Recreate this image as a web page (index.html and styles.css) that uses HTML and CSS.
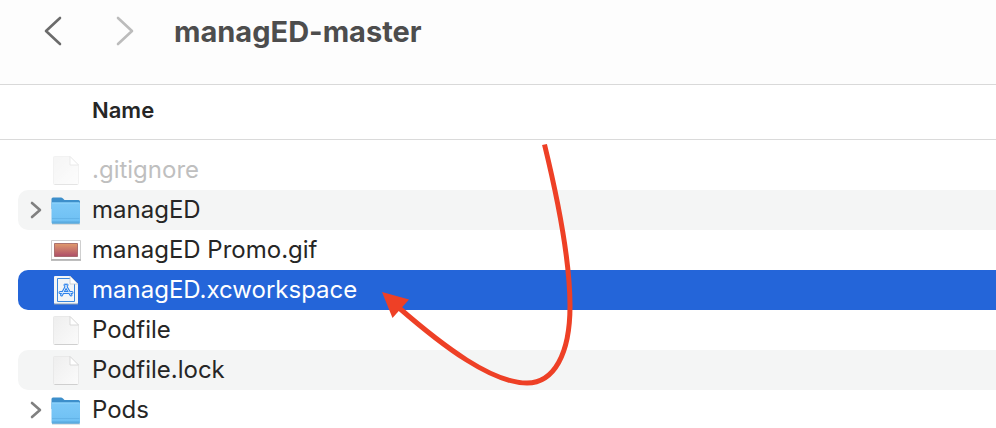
FILE: index.html
```html
<!DOCTYPE html>
<html lang="en">
<head>
<meta charset="utf-8">
<title>managED-master</title>
<link rel="stylesheet" href="styles.css">
</head>
<body>
<svg class="defs" aria-hidden="true">
  <defs>
    <linearGradient id="paper" x1="0" y1="0" x2="1" y2="1"><stop offset="0" stop-color="#eeeeee"/><stop offset="1" stop-color="#fbfbfb"/></linearGradient>
    <linearGradient id="front" x1="0" y1="0" x2="0" y2="1"><stop offset="0" stop-color="#7dc9f8"/><stop offset="1" stop-color="#6dbff3"/></linearGradient>
    <linearGradient id="sunset" x1="0" y1="0" x2="0" y2="1"><stop offset="0" stop-color="#e09a6c"/><stop offset="1" stop-color="#ad4d68"/></linearGradient>
    <symbol id="file" viewBox="0 0 32 32">
      <path d="M4.500 2.500H20L28.500 11V29.500Q28.500 30.500 27.500 30.500H4.500Q3.500 30.500 3.500 29.500V3.500Q3.500 2.500 4.500 2.500Z" fill="url(#paper)" stroke="#e9e9e9"/>
      <path d="M4.500 30.500H27.500" stroke="#cfcfcf"/>
      <path d="M20 2.500V11H28.500Z" fill="#fff" stroke="#d2d2d2" stroke-width=".8"/>
    </symbol>
    <symbol id="folder" viewBox="0 0 32 32">
      <path d="M2 29.500H30V30.500H2Z" fill="#9aa3a8" opacity=".6"/>
      <path d="M1.500 5Q1.500 3.500 3 3.500H11Q12 3.500 13 4.500L14.500 6H28.500Q30 6 30 7.500V15H1.500Z" fill="#3d8fcb"/>
      <path d="M1.500 9.500Q1.500 8.500 2.500 8.500H29Q30 8.500 30 9.500V28.500Q30 29.500 29 29.500H2.500Q1.500 29.500 1.500 28.500Z" fill="url(#front)"/>
      <path d="M2 9H29.500" stroke="#91d5fb"/>
      <path d="M2 24.500H29.500M2 27.500H29.500" stroke="#5fb0e4" stroke-width=".8"/>
      <path d="M2 29H29.500" stroke="#4b99cd"/>
    </symbol>
  </defs>
</svg>
<header class="toolbar">
  <nav class="history">
    <button type="button" class="nav-button" aria-label="Back"><svg viewBox="0 0 20 30"><path d="M16 2L2 15L16 28"/></svg></button>
    <button type="button" class="nav-button forward" aria-label="Forward" disabled><svg viewBox="0 0 20 30"><path d="M2 2L16 15L2 28"/></svg></button>
  </nav>
  <h1>managED-master</h1>
</header>
<main class="browser">
  <table class="files">
    <thead><tr><th scope="col">Name</th></tr></thead>
    <tbody>
      <tr class="hidden-file"><td><div class="row"><span class="disclosure"></span><svg class="icon"><use href="#file"/></svg><span class="name">.gitignore</span></div></td></tr>
      <tr><td><div class="row"><button type="button" class="disclosure" aria-label="Expand managED"><svg viewBox="0 0 12 18"><path d="M2 2L10 9L2 16"/></svg></button><svg class="icon"><use href="#folder"/></svg><span class="name">managED</span></div></td></tr>
      <tr><td><div class="row"><span class="disclosure"></span><svg class="icon" viewBox="0 0 32 32"><path d="M1 8H31V27H1Z" fill="#000" opacity=".12"/><path d="M1.500 6.500H30.500V25.500H1.500Z" fill="#fff" stroke="#cfcfcf"/><path d="M1 26H31" stroke="#9c9c9c"/><path d="M4.500 9.500H27.500V22.500H4.500Z" fill="url(#sunset)" stroke="#9b5c5c" stroke-width=".8"/></svg><span class="name">managED Promo.gif</span></div></td></tr>
      <tr class="selected"><td><div class="row"><span class="disclosure"></span><svg class="icon" viewBox="0 0 32 32"><path d="M5 2H20L28 10V29Q28 30 27 30H5Q4 30 4 29V3Q4 2 5 2Z" fill="#f3f5f7"/><path d="M4 30H28" stroke="#8fa0b5"/><path d="M20 4.500H7.500V27.500H24.500V10" fill="none" stroke="#3b87de"/><path d="M20 2V10H28Z" fill="#fff" stroke="#c3c8cf" stroke-width=".8"/><g fill="none" stroke-linecap="round"><g stroke="#2f83eb" stroke-width="3"><path d="M17 11L11.500 21M15 11L21 21M10 18.500H22"/></g><g stroke="#d9eafd" stroke-width="1"><path d="M17 11L11.500 21M15 11L21 21M10 18.500H22"/></g></g></svg><span class="name">managED.xcworkspace</span></div></td></tr>
      <tr><td><div class="row"><span class="disclosure"></span><svg class="icon"><use href="#file"/></svg><span class="name">Podfile</span></div></td></tr>
      <tr><td><div class="row"><span class="disclosure"></span><svg class="icon"><use href="#file"/></svg><span class="name">Podfile.lock</span></div></td></tr>
      <tr><td><div class="row"><button type="button" class="disclosure" aria-label="Expand Pods"><svg viewBox="0 0 12 18"><path d="M2 2L10 9L2 16"/></svg></button><svg class="icon"><use href="#folder"/></svg><span class="name">Pods</span></div></td></tr>
    </tbody>
  </table>
  <svg class="arrow" viewBox="380 140 196 250" aria-hidden="true">
    <path d="M544.500 144.500C559 204 570 266 570 306C570 354 554 383 527 383C492 383 444 347 398 307" fill="none" stroke="#ee4026" stroke-width="5"/>
    <path d="M382 292L409 299.500L392.500 318Z" fill="#ee4026"/>
  </svg>
</main>
</body>
</html>
```
FILE: styles.css
```css
* {
  box-sizing: border-box;
}

body {
  margin: 0;
  overflow: hidden;
  background: #fff;
  color: #262626;
  font-family: Inter, "Liberation Sans", sans-serif;
  font-size: 24px;
}

.defs {
  position: absolute;
  width: 0;
  height: 0;
}

.toolbar {
  display: flex;
  align-items: flex-start;
  gap: 38px;
  height: 85px;
  padding: 16px 44px;
  background: #fdfdfd;
  border-bottom: 1px solid #d9d9d9;
}

.history {
  display: flex;
  gap: 52px;
}

button {
  padding: 0;
  border: 0;
  background: none;
}

.nav-button {
  display: block;
  width: 20px;
  height: 30px;
}

.nav-button svg {
  display: block;
  width: 20px;
  height: 30px;
  fill: none;
  stroke: #6b6b6b;
  stroke-width: 2.6;
  stroke-linecap: round;
  stroke-linejoin: round;
}

.nav-button.forward svg {
  stroke: #bcbcbc;
}

h1 {
  margin: 0;
  color: #4d4d4d;
  font-size: 29px;
  font-weight: 700;
  line-height: 32px;
}

.browser {
  position: relative;
}

.files {
  width: 100%;
  border-spacing: 0;
}

th {
  height: 55px;
  padding: 0 0 4px 92px;
  border-bottom: 1px solid #dadada;
  font-size: 22px;
  font-weight: 600;
  text-align: left;
}

td {
  padding: 0 0 0 18px;
}

tbody::before {
  content: "";
  display: block;
  height: 10px;
}

.row {
  display: flex;
  align-items: center;
  height: 40px;
  padding-left: 12px;
  border-radius: 10px 0 0 10px;
}

.name {
  padding-bottom: 2px;
}

tr:nth-child(even) .row {
  background: #f4f5f5;
}

tr.selected .row {
  background: #2465d9;
  color: #fff;
}

.hidden-file {
  color: #bfbfbf;
}

.hidden-file .icon {
  opacity: .55;
}

.disclosure {
  display: block;
  flex: none;
  width: 20px;
  height: 18px;
}

.disclosure svg {
  display: block;
  width: 12px;
  height: 18px;
  fill: none;
  stroke: #808080;
  stroke-width: 2.6;
  stroke-linecap: round;
  stroke-linejoin: round;
}

.icon {
  flex: none;
  width: 32px;
  height: 32px;
  margin-right: 10px;
}

.arrow {
  position: absolute;
  top: 55px;
  left: 380px;
  width: 196px;
  height: 250px;
  pointer-events: none;
}
```
